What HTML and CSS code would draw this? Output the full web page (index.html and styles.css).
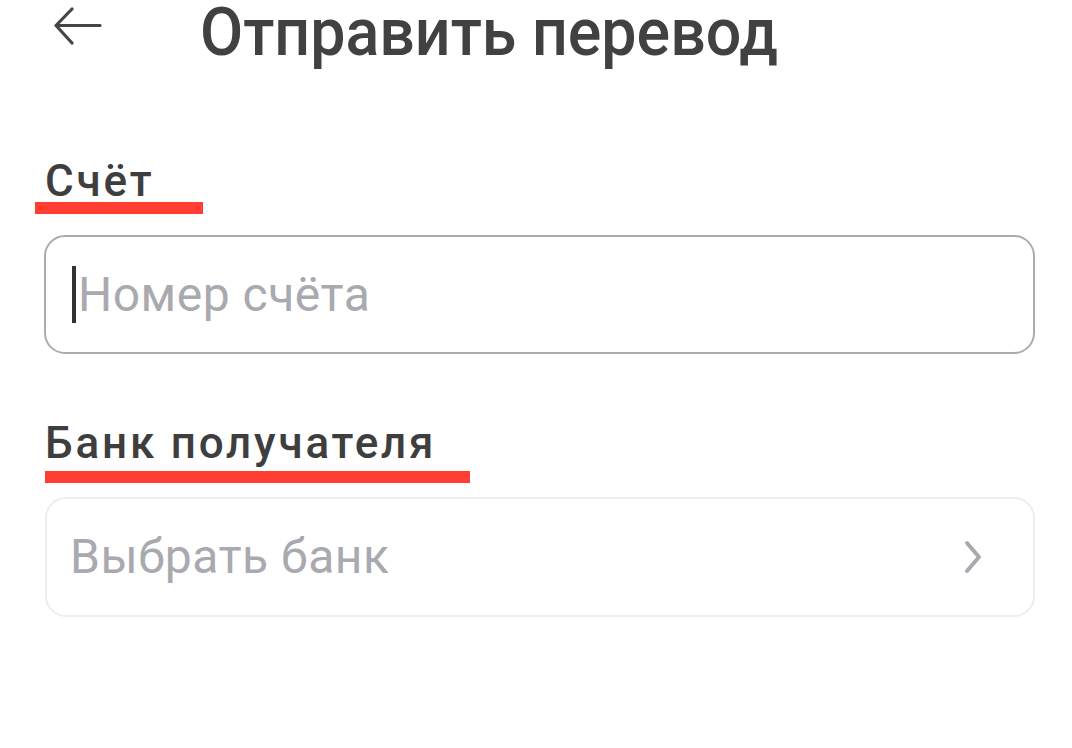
FILE: index.html
```html
<!DOCTYPE html>
<html lang="ru">
<head>
<meta charset="utf-8">
<link rel="stylesheet" href="styles.css">
</head>
<body>
<div class="page">
  <header class="header">
    <span class="back">
      <svg width="48" height="40" viewBox="0 0 48 40" fill="none" stroke="#454545" stroke-width="3.2" stroke-linecap="round" stroke-linejoin="round">
        <path d="M46 18.5H3"/>
        <path d="M18 2L2 18.5L18 36"/>
      </svg>
    </span>
    <h1 class="title">Отправить перевод</h1>
  </header>

  <section class="group group-account">
    <div class="label">Счёт</div>
    <div class="mark mark-account"></div>
    <div class="field field-active">
      <span class="cursor"></span>
      <span class="placeholder">Номер счёта</span>
    </div>
  </section>

  <section class="group group-bank">
    <div class="label">Банк получателя</div>
    <div class="mark mark-bank"></div>
    <div class="field field-select">
      <span class="placeholder">Выбрать банк</span>
      <svg class="chevron" width="18" height="34" viewBox="0 0 18 34" fill="none" stroke="#a9a9b0" stroke-width="4" stroke-linecap="round" stroke-linejoin="round">
        <path d="M3 3L15 17L3 31"/>
      </svg>
    </div>
  </section>
</div>
</body>
</html>
```

FILE: styles.css
```css
html, body {
  margin: 0;
  padding: 0;
  background: #ffffff;
}

body {
  font-family: Roboto, "Noto Sans", "Liberation Sans", sans-serif;
  color: #414141;
}

.page {
  width: 1072px;
  height: 748px;
  overflow: hidden;
  padding: 0 37px 0 44px;
  box-sizing: border-box;
}

.header {
  display: flex;
  align-items: flex-start;
  height: 72px;
}

.back {
  display: flex;
  margin: 7px 0 0 10px;
  width: 48px;
  height: 40px;
}

.title {
  margin: 0 0 0 98px;
  padding-bottom: 6px;
  font-size: 66px;
  line-height: 66px;
  font-weight: 500;
  color: #414141;
  white-space: nowrap;
  transform: scaleX(0.95);
  transform-origin: left top;
}

.group {
  display: flex;
  flex-direction: column;
}

.group-account {
  margin-top: 88px;
}

.group-bank {
  margin-top: 68px;
}

.label {
  font-size: 44px;
  line-height: 42px;
  font-weight: 500;
  color: #3e3e3e;
  letter-spacing: 2.8px;
  padding-left: 1px;
}

.mark {
  height: 12px;
  background: #ff3d30;
}

.mark-account {
  width: 168px;
  margin-left: -9px;
  margin-top: 0;
}

.mark-bank {
  width: 425px;
  margin-top: 7px;
  margin-left: 1px;
}

.field {
  display: flex;
  align-items: center;
  box-sizing: border-box;
  border-radius: 21px;
  background: #ffffff;
}

.field-active {
  margin-top: 21px;
  height: 119px;
  border: 2px solid #ababb1;
  padding-left: 26px;
}

.field-select {
  margin-top: 14px;
  margin-left: 1px;
  height: 120px;
  border: 2px solid #eeeef1;
  padding: 0 51px 0 23px;
  justify-content: space-between;
}

.cursor {
  width: 4px;
  height: 57px;
  background: #333333;
  margin-right: 2px;
}

.placeholder {
  font-size: 48px;
  line-height: 56px;
  color: #a9a9b0;
  font-weight: 400;
  letter-spacing: 0.5px;
}

.chevron {
  display: block;
}
```
